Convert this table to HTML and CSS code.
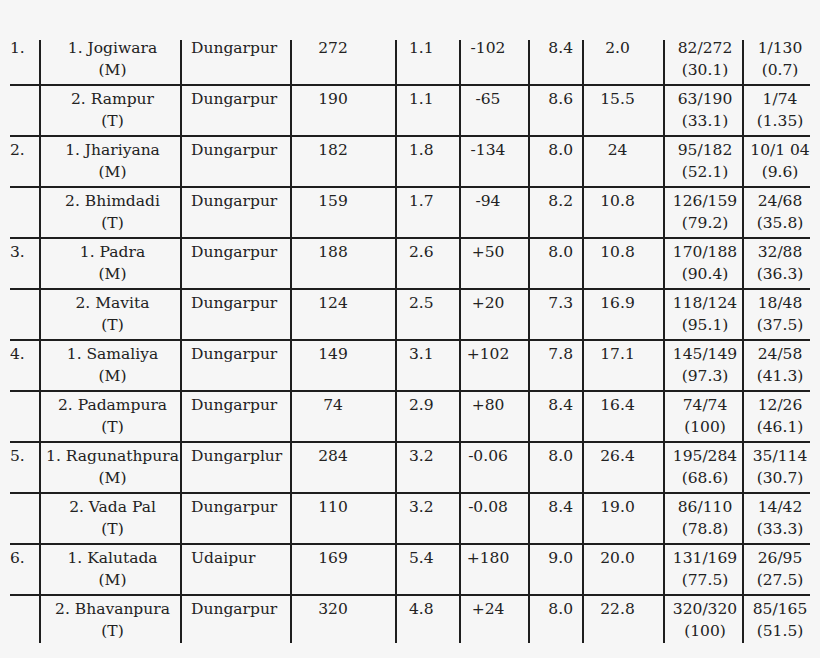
FILE: index.html
```html
<!DOCTYPE html>
<html lang="en">
<head>
<meta charset="utf-8">
<title>Table</title>
<link rel="stylesheet" href="styles.css">
</head>
<body>
<div class="clip">
<table class="data">
<colgroup>
<col class="w1"><col class="w2"><col class="w3"><col class="w4"><col class="w5"><col class="w6"><col class="w7"><col class="w8"><col class="w9"><col class="w10">
</colgroup>
<tbody>
<tr><td class="c1">1.</td><td class="c2">1. Jogiwara<br>(M)</td><td class="c3">Dungarpur</td><td class="c4">272</td><td class="c5">1.1</td><td class="c6">-102</td><td class="c7">8.4</td><td class="c8">2.0</td><td class="c9">82/272<br>(30.1)</td><td class="c10">1/130<br>(0.7)</td></tr>
<tr><td class="c1"></td><td class="c2">2. Rampur<br>(T)</td><td class="c3">Dungarpur</td><td class="c4">190</td><td class="c5">1.1</td><td class="c6">-65</td><td class="c7">8.6</td><td class="c8">15.5</td><td class="c9">63/190<br>(33.1)</td><td class="c10">1/74<br>(1.35)</td></tr>
<tr><td class="c1">2.</td><td class="c2">1. Jhariyana<br>(M)</td><td class="c3">Dungarpur</td><td class="c4">182</td><td class="c5">1.8</td><td class="c6">-134</td><td class="c7">8.0</td><td class="c8">24</td><td class="c9">95/182<br>(52.1)</td><td class="c10">10/1 04<br>(9.6)</td></tr>
<tr><td class="c1"></td><td class="c2">2. Bhimdadi<br>(T)</td><td class="c3">Dungarpur</td><td class="c4">159</td><td class="c5">1.7</td><td class="c6">-94</td><td class="c7">8.2</td><td class="c8">10.8</td><td class="c9">126/159<br>(79.2)</td><td class="c10">24/68<br>(35.8)</td></tr>
<tr><td class="c1">3.</td><td class="c2">1. Padra<br>(M)</td><td class="c3">Dungarpur</td><td class="c4">188</td><td class="c5">2.6</td><td class="c6">+50</td><td class="c7">8.0</td><td class="c8">10.8</td><td class="c9">170/188<br>(90.4)</td><td class="c10">32/88<br>(36.3)</td></tr>
<tr><td class="c1"></td><td class="c2">2. Mavita<br>(T)</td><td class="c3">Dungarpur</td><td class="c4">124</td><td class="c5">2.5</td><td class="c6">+20</td><td class="c7">7.3</td><td class="c8">16.9</td><td class="c9">118/124<br>(95.1)</td><td class="c10">18/48<br>(37.5)</td></tr>
<tr><td class="c1">4.</td><td class="c2">1. Samaliya<br>(M)</td><td class="c3">Dungarpur</td><td class="c4">149</td><td class="c5">3.1</td><td class="c6">+102</td><td class="c7">7.8</td><td class="c8">17.1</td><td class="c9">145/149<br>(97.3)</td><td class="c10">24/58<br>(41.3)</td></tr>
<tr><td class="c1"></td><td class="c2">2. Padampura<br>(T)</td><td class="c3">Dungarpur</td><td class="c4">74</td><td class="c5">2.9</td><td class="c6">+80</td><td class="c7">8.4</td><td class="c8">16.4</td><td class="c9">74/74<br>(100)</td><td class="c10">12/26<br>(46.1)</td></tr>
<tr><td class="c1">5.</td><td class="c2">1. Ragunathpura<br>(M)</td><td class="c3">Dungarplur</td><td class="c4">284</td><td class="c5">3.2</td><td class="c6">-0.06</td><td class="c7">8.0</td><td class="c8">26.4</td><td class="c9">195/284<br>(68.6)</td><td class="c10">35/114<br>(30.7)</td></tr>
<tr><td class="c1"></td><td class="c2">2. Vada Pal<br>(T)</td><td class="c3">Dungarpur</td><td class="c4">110</td><td class="c5">3.2</td><td class="c6">-0.08</td><td class="c7">8.4</td><td class="c8">19.0</td><td class="c9">86/110<br>(78.8)</td><td class="c10">14/42<br>(33.3)</td></tr>
<tr><td class="c1">6.</td><td class="c2">1. Kalutada<br>(M)</td><td class="c3">Udaipur</td><td class="c4">169</td><td class="c5">5.4</td><td class="c6">+180</td><td class="c7">9.0</td><td class="c8">20.0</td><td class="c9">131/169<br>(77.5)</td><td class="c10">26/95<br>(27.5)</td></tr>
<tr><td class="c1"></td><td class="c2">2. Bhavanpura<br>(T)</td><td class="c3">Dungarpur</td><td class="c4">320</td><td class="c5">4.8</td><td class="c6">+24</td><td class="c7">8.0</td><td class="c8">22.8</td><td class="c9">320/320<br>(100)</td><td class="c10">85/165<br>(51.5)</td></tr>
</tbody>
</table>
</div>
</body>
</html>
```
FILE: styles.css
```css
html, body {
  margin: 0;
  padding: 0;
  background: #f6f6f6;
}
.clip {
  margin: 40px 0 0 10px;
  width: 800px;
  height: 603px;
  overflow: hidden;
}
.data {
  margin-top: -5px;
  width: 800px;
  table-layout: fixed;
  border-collapse: separate;
  border-spacing: 0;
  font-family: "DejaVu Serif", "Liberation Serif", serif;
  font-size: 15.5px;
  line-height: 22px;
  color: #222222;
}
.w1 { width: 29px; }
.w2 { width: 141px; }
.w3 { width: 110px; }
.w4 { width: 105px; }
.w5 { width: 64px; }
.w6 { width: 69px; }
.w7 { width: 54px; }
.w8 { width: 81px; }
.w9 { width: 79px; }
.w10 { width: 68px; }
.data td {
  box-sizing: border-box;
  vertical-align: top;
  white-space: nowrap;
  padding: 2px 0 3px 0;
  border-bottom: 2px solid #1e1e1e;
  border-left: 2px solid #1e1e1e;
  height: 51px;
  overflow: visible;
}
.data td.c1 {
  border-left: none;
  text-align: left;
}
.c2 { text-align: center; padding-left: 4px !important; }
.c3 { text-align: left; padding-left: 9px !important; }
.c4 { text-align: center; padding-right: 21px !important; }
.c5 { text-align: left; padding-left: 12px !important; }
.c6 { text-align: center; padding-right: 13px !important; }
.c7 { text-align: right; padding-right: 9px !important; }
.c8 { text-align: center; padding-right: 12px !important; }
.c9 { text-align: center; padding-left: 3px !important; }
.c10 { text-align: center; padding-left: 6px !important; }
```
